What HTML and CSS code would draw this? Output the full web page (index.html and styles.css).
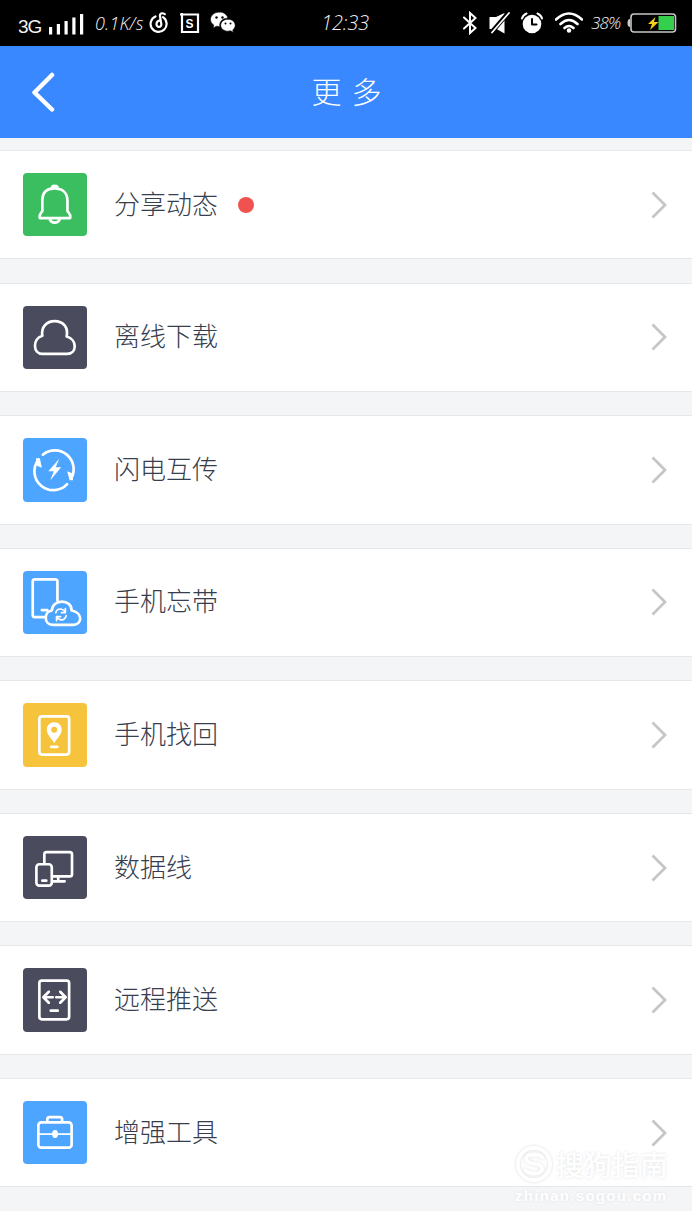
FILE: index.html
```html
<!DOCTYPE html>
<html lang="zh-CN">
<head>
    <meta charset="UTF-8">
    <title>更多</title>
    <link rel="stylesheet" href="styles.css">
</head>
<body>
    <svg class="defs" width="0" height="0">
        <symbol id="arrow" viewBox="0 0 18 28"><path d="M2.500 1.500 15 14 2.500 26.500"/></symbol>
    </svg>

    <div class="status-bar">
        <div class="status-left">
            <span class="network">3G</span>
            <svg class="signal" width="35" height="22" viewBox="0 0 35 22"><path d="M0 14h3.200v7.500H0zM7.800 11H11v10.500H7.800zM15.500 8h3.200v13.500h-3.200zM23.300 4.500h3.200v17h-3.200zM31 1h3.200v20.500H31z"/></svg>
            <span class="speed">0.1K/s</span>
            <svg class="music" width="20" height="22" viewBox="0 0 20 22"><path d="M6.500 4.500A8 8 0 1 0 14 5.200M15.800 2.200c-3-2-5.300-.5-4.800 2.300l1.300 7.500c.3 3.800-4.800 3.800-4.800.3 0-2.300 1.700-3.800 4-4"/></svg>
            <svg class="square" width="20" height="22" viewBox="0 0 20 22"><path d="M0 2.500h18V20H2V1"/><text x="5.600" y="16">S</text></svg>
            <svg class="wechat" width="26" height="24" viewBox="0 0 26 24"><path d="M9.500 1C4.500 1 .5 4.300.5 8.400c0 2.400 1.300 4.400 3.300 5.700L3 17l3.600-1.800 3.200.5C9 10.500 12.700 7.200 18 7.200 17 3.500 13.700 1 9.500 1z"/><path d="M18 8.200c-4.200 0-7.300 2.700-7.300 6s3.100 6 7.300 6l2.500-.4 3 1.700-.8-2.500c1.500-1.100 2.500-2.800 2.500-4.800 0-3.300-3-6-7.200-6z"/><g class="eyes"><circle cx="6.500" cy="6.500" r="1.200"/><circle cx="12.500" cy="6.500" r="1.200"/><circle cx="15.500" cy="12.500" r="1"/><circle cx="20.500" cy="12.500" r="1"/></g></svg>
        </div>
        <span class="clock">12:33</span>
        <div class="status-right">
            <svg class="bluetooth" width="14" height="24" viewBox="0 0 14 24"><path d="M1 6.500 12.500 17 7 22V2l5.500 5L1 17.500"/></svg>
            <svg class="mute" width="21" height="22" viewBox="0 0 21 22"><path class="fill" d="M.5 5H7l8.500-4V21.500L7.500 17H.5z"/><path class="cut" d="M20 0 2 21"/><path class="slash" d="M20 1 3 20.500"/></svg>
            <svg class="alarm" width="22" height="22" viewBox="0 0 22 22"><circle class="fill" cx="11" cy="12" r="9.300"/><path class="edge" d="M1 6.500Q2 3 5.500 1.500M21 6.500Q20 3 16.500 1.500"/><path class="hands" d="M11 7v5.500h4.500"/></svg>
            <svg class="wifi" width="28" height="22" viewBox="0 0 28 22"><path d="M1 7.500q13-12 26 0M5.500 12q8.500-8 17 0M9.500 16q4.500-4 9 0"/><circle cx="14" cy="18.500" r="2.200"/></svg>
            <span class="percent">38%</span>
            <svg class="battery" width="50" height="20" viewBox="0 0 50 20"><path class="cap" d="M3 6Q.5 6 .5 10T3 14z"/><rect class="case" x="4" y="1" width="44.500" height="18" rx="3"/><path class="charge" d="M31.500 3H47v14H31.500z"/><path class="bolt" d="M28.500 4 21 11h4l-2 6 8.500-8h-4.500z"/></svg>
        </div>
    </div>

    <header class="title-bar">
        <svg class="back" width="26" height="40" viewBox="0 0 26 40"><path d="M22 3 4.500 20.500 22 37.500"/></svg>
        <h1>更多</h1>
    </header>

    <main class="menu">
        <a class="item">
            <svg class="icon green" viewBox="0 0 64 64"><path d="M29 16q0-3 3-3t3 3M17 45.500h30.500q1-3-2.700-7V28c0-8-5-12.500-13-12.500S19.500 20 19.500 28v10.500q-3.500 4-2.500 7zM27 46.500q1 3.500 5 3.500t5-3.500"/></svg>
            <span class="label">分享动态</span><i class="dot"></i>
            <svg class="arrow"><use href="#arrow"/></svg>
        </a>
        <a class="item">
            <svg class="icon dark" viewBox="0 0 64 64"><path d="M20 48.300h24.500c10 0 10.500-14.500-.5-17.500C46 21 40 15.300 32 15.300S18 21 19.500 30C9.500 33 9.500 48.300 20 48.300z"/></svg>
            <span class="label">离线下载</span>
            <svg class="arrow"><use href="#arrow"/></svg>
        </a>
        <a class="item">
            <svg class="icon blue" viewBox="0 0 64 64"><path d="M20 16.800A19 19 0 0 1 48.500 41M44.500 46.500A19 19 0 0 1 15.500 22"/><path class="solid" d="M36.500 21 25.500 33.500H31l-3.500 9L38.500 29.500H33zM50.500 42.500H47l-2.500-9 5 2zM13 20.500h4l2 9.500-5-2z"/></svg>
            <span class="label">闪电互传</span>
            <svg class="arrow"><use href="#arrow"/></svg>
        </a>
        <a class="item">
            <svg class="icon blue" viewBox="0 0 64 64"><path d="M21 46.500h-9q-2.200 0-2.200-2.200v-34Q9.800 8.500 12 8.500h20.500q2.200 0 2.200 2.200V30M19 39.500h5.500M30 54.300h20.500c9.500 0 10-12.500-1.500-14.500 0-12-19-12-20 0-8.500 1.500-8 14.500 1 14.500z"/><path class="thin" d="M33 42q1.500-4.500 6-3.500 2.500.5 3.500 3m.2-3.500v4h-4M43.500 45q-1.500 5-6 4-2.500-.5-3.500-3m-.2 4v-4h4"/></svg>
            <span class="label">手机忘带</span>
            <svg class="arrow"><use href="#arrow"/></svg>
        </a>
        <a class="item">
            <svg class="icon yellow" viewBox="0 0 64 64"><rect x="16.500" y="13.500" width="30" height="38.500" rx="2.500"/><path d="M28.500 44.300h6"/><path class="solid" fill-rule="evenodd" d="M31.500 19.500c-4.500 0-7.500 3.500-7.500 7.500 0 5 5 9 7.500 13.500C34 36 39 32 39 27c0-4-3-7.500-7.500-7.500zm0 4.500a3 3 0 1 1 0 6 3 3 0 0 1 0-6z"/></svg>
            <span class="label">手机找回</span>
            <svg class="arrow"><use href="#arrow"/></svg>
        </a>
        <a class="item">
            <svg class="icon dark" viewBox="0 0 64 64"><path d="M21.500 28V18.500q0-2.200 2.200-2.200h23.500q2.200 0 2.200 2.200v20q0 2.200-2.200 2.200H30M35.500 41v4.500M30 45.700h12M19.500 45h4"/><rect x="13.500" y="28.500" width="15.500" height="21.500" rx="3"/></svg>
            <span class="label">数据线</span>
            <svg class="arrow"><use href="#arrow"/></svg>
        </a>
        <a class="item">
            <svg class="icon dark" viewBox="0 0 64 64"><rect x="16.500" y="12.700" width="30" height="39" rx="2.500"/><path d="M28 43h7M20.500 29.500h9.500M33.500 29.500H43M26 24l-5.500 5.500L26 35M37.500 24l5.500 5.500-5.500 5.500"/></svg>
            <span class="label">远程推送</span>
            <svg class="arrow"><use href="#arrow"/></svg>
        </a>
        <a class="item">
            <svg class="icon blue" viewBox="0 0 64 64"><rect x="15.500" y="21.500" width="33.500" height="25.500" rx="3"/><path d="M24.500 21v-2.500q0-2.200 2.200-2.200h10.500q2.200 0 2.200 2.200V21"/><path class="thin" d="M16 33.300h33"/><ellipse class="solid" cx="32.300" cy="33.300" rx="3" ry="4"/></svg>
            <span class="label">增强工具</span>
            <svg class="arrow"><use href="#arrow"/></svg>
        </a>
    </main>

    <div class="watermark">
        <div class="brand">
            <svg width="38" height="38" viewBox="0 0 40 40"><circle cx="20" cy="20" r="17"/><path d="M29 13q-3-3-9-3-8 0-8 4.500 0 4 8 5 8.500 1 8.500 5.500 0 5-8.500 5-6 0-9.500-3.500"/></svg>
            <span>搜狗指南</span>
        </div>
        <div class="site">zhinan.sogou.com</div>
    </div>
</body>
</html>
```

FILE: styles.css
```css
body {
    margin: 0;
    position: relative;
    height: 1230px;
    overflow: hidden;
    background-color: #fff;
    font-family: "Noto Sans CJK SC", sans-serif;
    color: #373e4d;
}
svg {
    display: block;
    flex: none;
    fill: none;
    stroke-linecap: round;
    stroke-linejoin: round;
}
.defs {
    position: absolute;
}

/* status bar */
.status-bar {
    display: grid;
    grid-template-columns: 1fr auto 1fr;
    align-items: center;
    height: 46px;
    padding: 0 15px 0 18px;
    box-sizing: border-box;
    background-color: #000;
    color: #f2f2f2;
    line-height: 46px;
    white-space: nowrap;
}
.status-left,
.status-right {
    display: flex;
    align-items: center;
    height: 46px;
}
.status-right {
    justify-content: flex-end;
}
.network {
    width: 31px;
    padding-top: 8px;
    font-family: "Liberation Sans", sans-serif;
    font-size: 19px;
    letter-spacing: -1px;
}
.signal {
    margin-top: 2px;
}
.speed,
.clock,
.percent {
    font-family: "Open Sans", sans-serif;
    font-style: italic;
    font-weight: 300;
}
.speed {
    width: 54px;
    margin-left: 11px;
    font-size: 18px;
    letter-spacing: 0.2px;
}
.clock {
    padding-right: 5px;
    font-size: 20px;
    letter-spacing: -0.2px;
}
.percent {
    width: 35px;
    margin-left: 8px;
    font-size: 17px;
    letter-spacing: -0.8px;
}
.signal,
.wechat {
    fill: #fff;
}
.music,
.square {
    stroke: #fff;
    stroke-width: 2.2;
}
.square {
    margin-left: 11px;
    stroke-linecap: butt;
    stroke-linejoin: miter;
}
.square text {
    fill: #fff;
    stroke: none;
    font: bold 12px "Liberation Sans", sans-serif;
}
.wechat {
    margin-left: 10px;
}
.wechat path {
    stroke: #000;
    stroke-width: 0.6;
}
.eyes {
    fill: #000;
}
.bluetooth {
    stroke: #fff;
    stroke-width: 2;
    stroke-linejoin: miter;
}
.mute {
    margin-left: 12px;
}
.fill {
    fill: #fff;
}
.cut {
    stroke: #000;
    stroke-width: 4.5;
}
.slash {
    stroke: #fff;
    stroke-width: 1.8;
}
.alarm {
    margin-left: 11px;
}
.edge {
    stroke: #fff;
    stroke-width: 2;
}
.hands {
    stroke: #000;
    stroke-width: 2;
}
.wifi {
    margin-left: 12px;
    stroke: #fff;
    stroke-width: 2.6;
}
.wifi circle {
    fill: #fff;
    stroke: none;
}
.battery {
    margin-left: 1px;
}
.cap {
    fill: #ccc;
}
.case {
    stroke: #c6c6c6;
    stroke-width: 1.6;
}
.charge {
    fill: #35d04b;
}
.bolt {
    fill: #f8cf18;
}

/* title bar */
.title-bar {
    display: grid;
    grid-template-columns: 60px 1fr 60px;
    align-items: center;
    height: 92px;
    background-color: #3988ff;
    color: #fff;
}
.back {
    margin-left: 30px;
    stroke: #fff;
    stroke-width: 4.5;
}
h1 {
    margin: 0;
    padding-left: 11px;
    font-size: 30px;
    font-weight: 300;
    letter-spacing: 10px;
    text-align: center;
    line-height: 88px;
    height: 92px;
}

/* list */
.menu {
    display: grid;
    grid-auto-rows: 109.4px;
    gap: 23.2px;
    padding: 12px 0 24px;
    background-color: #f4f5f7;
}
.item {
    display: flex;
    align-items: center;
    box-sizing: border-box;
    padding: 0 24px 0 23px;
    border: solid #e6e7e9;
    border-width: 1px 0;
    background-color: #fff;
}
.icon {
    width: 63.5px;
    height: 63.5px;
    margin-right: 27.5px;
    border-radius: 4px;
    stroke: #fff;
    stroke-width: 2.7;
}
.green {
    background-color: #3bbe5f;
}
.dark {
    background-color: #4a4b5c;
}
.blue {
    background-color: #4ea5ff;
}
.yellow {
    background-color: #f5c33c;
}
.solid {
    fill: #fff;
    stroke: none;
}
.thin {
    stroke-width: 1.7;
}
.label {
    padding-bottom: 4px;
    font-size: 26px;
    font-weight: 300;
    line-height: 40px;
}
.dot {
    width: 16px;
    height: 16px;
    margin-left: 20px;
    border-radius: 50%;
    background-color: #f0524f;
}
.arrow {
    width: 18px;
    height: 28px;
    margin-left: auto;
    stroke: #c5c6c8;
    stroke-width: 2.8;
    stroke-linecap: butt;
    stroke-linejoin: miter;
}

/* watermark over the last row */
.watermark {
    position: absolute;
    right: 24px;
    bottom: 22px;
    color: #fff;
    text-shadow: 0 0 3px #dfe0e2;
}
.brand {
    display: flex;
    align-items: center;
    justify-content: flex-end;
    gap: 3px;
    height: 40px;
    font-size: 28px;
    font-weight: 500;
    line-height: 40px;
}
.brand svg {
    stroke: #fff;
    stroke-width: 4;
    filter: drop-shadow(0 0 1.5px #dcdddf);
}
.site {
    height: 24px;
    font-family: "Liberation Sans", sans-serif;
    font-size: 15px;
    font-weight: bold;
    letter-spacing: 1.3px;
    line-height: 24px;
}
```
